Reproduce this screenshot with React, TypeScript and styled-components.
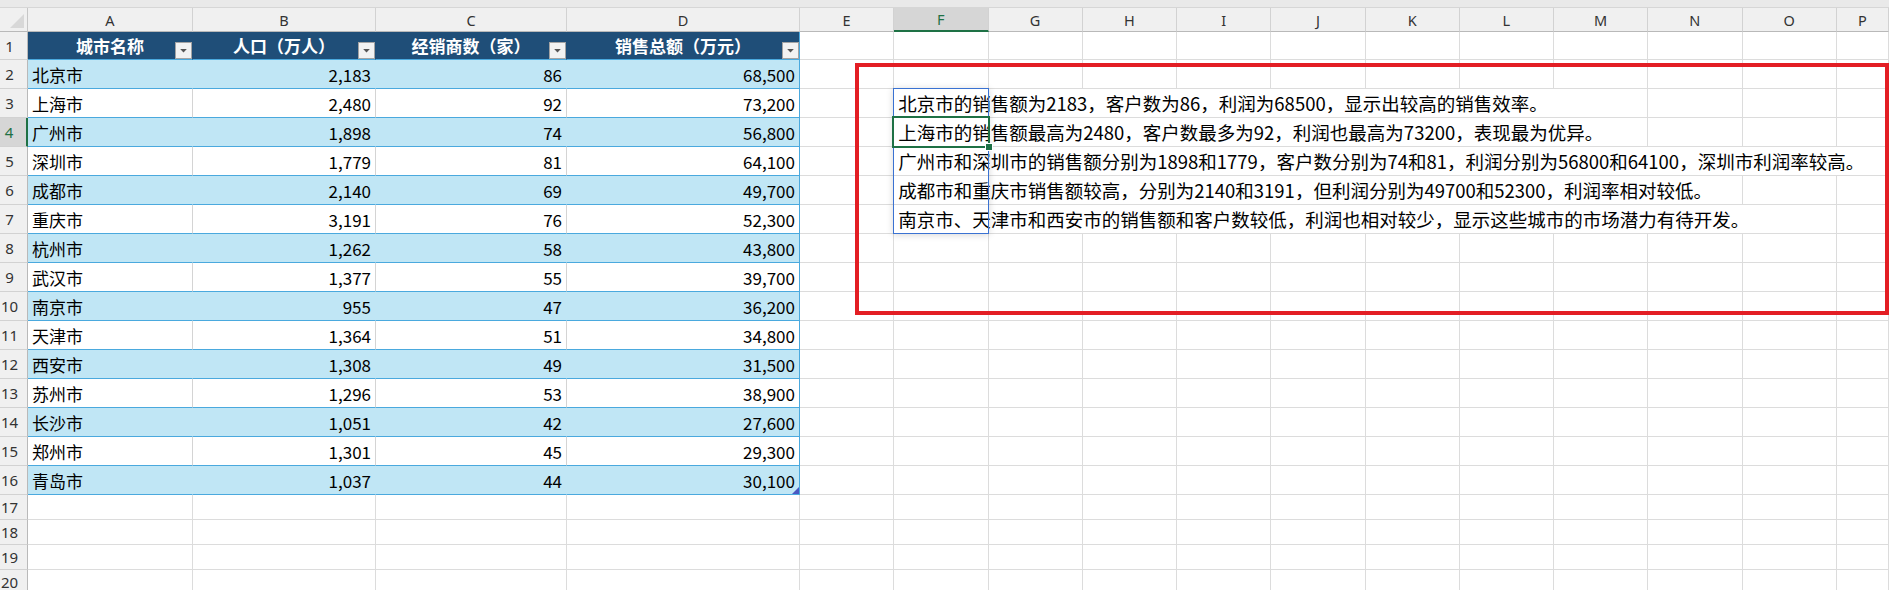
import styled, { createGlobalStyle } from "styled-components";

const GlobalStyle = createGlobalStyle`
  * { box-sizing: border-box; }
  html, body { margin: 0; padding: 0; background: #fff; overflow: hidden; }
  body {
    width: 1889px;
    height: 590px;
    font-family: "Noto Sans CJK SC", "Noto Sans", sans-serif;
    color: #000;
  }
`;

const COLS = "28px 165px 183px 191px 233px repeat(11, 94.25px) 1fr";
const ROWS = "24px 28px repeat(15, 29px) repeat(4, 25px)";

const GRID = "#dcdcdc";
const BAND = "#c0e6f5";
const LINE = "#4aa9de";
const NAVY = "#1f4e78";
const GREEN = "#1e7145";

const letters = "ABCDEFGHIJKLMNOP".split("");

const headers = ["城市名称", "人口（万人）", "经销商数（家）", "销售总额（万元）"];

const cities = [
  ["北京市", "2,183", "86", "68,500"],
  ["上海市", "2,480", "92", "73,200"],
  ["广州市", "1,898", "74", "56,800"],
  ["深圳市", "1,779", "81", "64,100"],
  ["成都市", "2,140", "69", "49,700"],
  ["重庆市", "3,191", "76", "52,300"],
  ["杭州市", "1,262", "58", "43,800"],
  ["武汉市", "1,377", "55", "39,700"],
  ["南京市", "955", "47", "36,200"],
  ["天津市", "1,364", "51", "34,800"],
  ["西安市", "1,308", "49", "31,500"],
  ["苏州市", "1,296", "53", "38,900"],
  ["长沙市", "1,051", "42", "27,600"],
  ["郑州市", "1,301", "45", "29,300"],
  ["青岛市", "1,037", "44", "30,100"],
];

// F3:F7
const notes: Record<number, string> = {
  3: "北京市的销售额为2183，客户数为86，利润为68500，显示出较高的销售效率。",
  4: "上海市的销售额最高为2480，客户数最多为92，利润也最高为73200，表现最为优异。",
  5: "广州市和深圳市的销售额分别为1898和1779，客户数分别为74和81，利润分别为56800和64100，深圳市利润率较高。",
  6: "成都市和重庆市销售额较高，分别为2140和3191，但利润分别为49700和52300，利润率相对较低。",
  7: "南京市、天津市和西安市的销售额和客户数较低，利润也相对较少，显示这些城市的市场潜力有待开发。",
};

const ACTIVE_COL = "F";
const ACTIVE_ROW = 4;

export default function App() {
  const rows = Array.from({ length: 20 }, (_, i) => i + 1);

  return (
    <>
      <GlobalStyle />
      <Page>
        <TopStrip />
        <Sheet>
          <Corner />
          {letters.map((l) => (
            <ColHead key={l} $active={l === ACTIVE_COL}>
              {l}
            </ColHead>
          ))}

          {rows.map((r) => (
            <RowCells key={r} row={r} />
          ))}

          <Overlay>
            <RangeBox />
            <ActiveBox>
              <FillHandle />
            </ActiveBox>
            <ResizeGrip />
            <RedBox />
          </Overlay>
        </Sheet>
      </Page>
    </>
  );
}

function RowCells({ row }: { row: number }) {
  const cells: JSX.Element[] = [];
  cells.push(
    <RowHead key="h" $active={row === ACTIVE_ROW}>
      {row}
    </RowHead>
  );

  letters.forEach((l, ci) => {
    const key = l + row;
    if (ci < 4 && row === 1) {
      cells.push(
        <HeadCell key={key} $edge={ci === 3}>
          <span />
          <HeadText>{headers[ci]}</HeadText>
          <FilterButton>
            <svg width="15" height="15" viewBox="0 0 15 15">
              <polygon points="4.2,6 10.8,6 7.5,9.4" fill="#555" />
            </svg>
          </FilterButton>
        </HeadCell>
      );
    } else if (ci < 4 && row >= 2 && row <= 16) {
      cells.push(
        <DataCell key={key} $band={row % 2 === 0} $edge={ci === 3} $num={ci > 0}>
          {cities[row - 2][ci]}
        </DataCell>
      );
    } else if (l === "F" && notes[row]) {
      cells.push(
        <NoteCell key={key}>
          <NoteText>{notes[row]}</NoteText>
        </NoteCell>
      );
    } else {
      cells.push(<BlankCell key={key} />);
    }
  });

  return <>{cells}</>;
}

const Page = styled.div`
  display: flex;
  flex-direction: column;
  width: 1889px;
  height: 590px;
  overflow: hidden;
`;

const TopStrip = styled.div`
  height: 8px;
  flex: none;
  background: #e9e9e9;
  border-bottom: 1px solid #d6d6d6;
`;

const Sheet = styled.div`
  position: relative;
  display: grid;
  grid-template-columns: ${COLS};
  grid-template-rows: ${ROWS};
  flex: none;
`;

const Corner = styled.div`
  position: relative;
  background: #f0f0f0;
  border-right: 1px solid #c6c6c6;
  border-bottom: 1px solid #b9b9b9;
  &::after {
    content: "";
    position: absolute;
    right: 3px;
    bottom: 3px;
    width: 14px;
    height: 14px;
    background: #d8d8d8;
    clip-path: polygon(100% 0, 100% 100%, 0 100%);
  }
`;

const ColHead = styled.div<{ $active?: boolean }>`
  display: flex;
  align-items: center;
  justify-content: center;
  font-family: "Noto Sans", "Open Sans", sans-serif;
  font-size: 14.5px;
  color: ${(p) => (p.$active ? GREEN : "#333")};
  background: ${(p) => (p.$active ? "#d6d6d6" : "#f0f0f0")};
  border-right: 1px solid #d2d2d2;
  border-bottom: ${(p) => (p.$active ? `2px solid ${GREEN}` : "1px solid #b9b9b9")};
`;

const RowHead = styled.div<{ $active?: boolean }>`
  display: flex;
  align-items: center;
  justify-content: center;
  padding-right: 8px;
  font-family: "Noto Sans", "Open Sans", sans-serif;
  font-size: 15px;
  color: ${(p) => (p.$active ? GREEN : "#333")};
  background: ${(p) => (p.$active ? "#d6d6d6" : "#f0f0f0")};
  border-bottom: 1px solid #d2d2d2;
  border-right: ${(p) => (p.$active ? `2px solid ${GREEN}` : "1px solid #b9b9b9")};
`;

const BlankCell = styled.div`
  background: #fff;
  border-right: 1px solid ${GRID};
  border-bottom: 1px solid ${GRID};
`;

const HeadCell = styled.div<{ $edge?: boolean }>`
  display: grid;
  grid-template-columns: 17px 1fr 17px;
  align-items: center;
  background: ${NAVY};
  border-right: 1px solid ${(p) => (p.$edge ? LINE : NAVY)};
  border-bottom: 1px solid ${LINE};
  min-width: 0;
`;

const HeadText = styled.span`
  justify-self: center;
  color: #fff;
  font-weight: 700;
  font-size: 17px;
  white-space: nowrap;
`;

const FilterButton = styled.span`
  align-self: end;
  width: 17px;
  height: 17px;
  display: flex;
  align-items: center;
  justify-content: center;
  background: #f2f2f2;
  border: 1px solid #a3a3a3;
`;

const DataCell = styled.div<{ $band?: boolean; $edge?: boolean; $num?: boolean }>`
  display: flex;
  align-items: center;
  justify-content: ${(p) => (p.$num ? "flex-end" : "flex-start")};
  padding: 1px 4px 0 4px;
  font-size: 17px;
  white-space: nowrap;
  overflow: hidden;
  background: ${(p) => (p.$band ? BAND : "#fff")};
  border-bottom: 1px solid ${LINE};
  border-right: 1px solid
    ${(p) => (p.$edge ? LINE : p.$band ? BAND : "#d4d4d4")};
`;

const NoteCell = styled.div`
  position: relative;
  z-index: 1;
  display: flex;
  overflow: visible;
  background: #fff;
  border-right: 1px solid ${GRID};
  border-bottom: 1px solid ${GRID};
`;

const NoteText = styled.span`
  display: flex;
  align-items: center;
  height: 100%;
  padding: 0 8px 0 4px;
  white-space: nowrap;
  background: #fff;
  font-size: 18.5px;
  color: #000;
`;

const Overlay = styled.div`
  position: absolute;
  inset: 0;
  z-index: 2;
  display: grid;
  grid-template-columns: ${COLS};
  grid-template-rows: ${ROWS};
  pointer-events: none;
`;

const RangeBox = styled.div`
  grid-row: 4 / 9;
  grid-column: 7 / 8;
  margin: -1px 0 0 -1px;
  border: 1px solid #3a72d2;
  box-shadow: 0 1px 7px rgba(0, 0, 0, 0.16);
`;

const ActiveBox = styled.div`
  position: relative;
  grid-row: 5 / 6;
  grid-column: 7 / 8;
  margin: -2px -1px -1px -2px;
  border: 2px solid ${GREEN};
`;

const FillHandle = styled.span`
  position: absolute;
  right: -4px;
  bottom: -4px;
  width: 6px;
  height: 6px;
  background: ${GREEN};
  outline: 1px solid #fff;
`;

const ResizeGrip = styled.div`
  grid-row: 17 / 18;
  grid-column: 5 / 6;
  justify-self: end;
  align-self: end;
  width: 7px;
  height: 7px;
  margin: 0 1px 1px 0;
  background: #4b58c2;
  clip-path: polygon(100% 0, 100% 100%, 0 100%);
`;

const RedBox = styled.div`
  grid-row: 3 / 12;
  grid-column: 6 / -1;
  margin: 3px 0 6px 55px;
  border: 4.5px solid #e31e24;
`;
